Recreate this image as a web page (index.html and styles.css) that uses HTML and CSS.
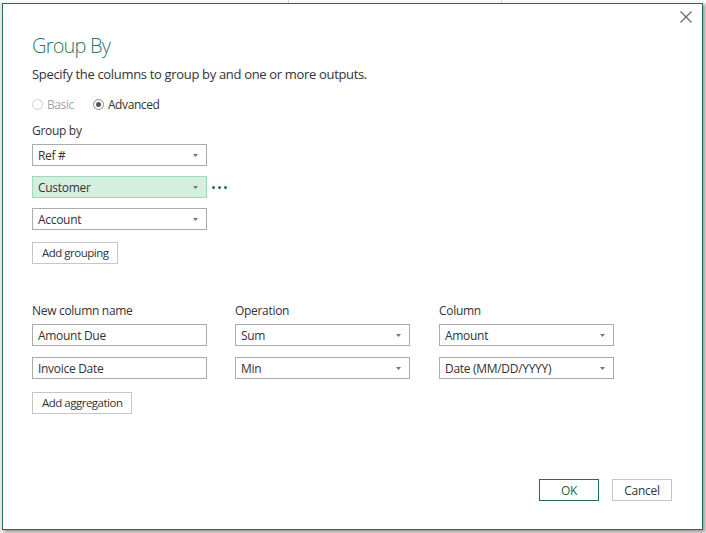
FILE: index.html
```html
<!DOCTYPE html>
<html lang="en">
<head>
<meta charset="utf-8">
<title>Group By</title>
<link rel="stylesheet" href="styles.css">
</head>
<body>
<div class="backdrop">
  <div class="dialog">
    <button class="close" aria-label="Close">
      <svg width="12" height="12" viewBox="0 0 12 12"><path d="M0.5 0.5 L11.5 11.5 M11.5 0.5 L0.5 11.5" stroke="#666" stroke-width="1.2" fill="none"/></svg>
    </button>
    <h1 class="title">Group By</h1>
    <p class="subtitle">Specify the columns to group by and one or more outputs.</p>
    <div class="mode">
      <label class="radio disabled"><span class="circle"></span>Basic</label>
      <label class="radio checked"><span class="circle"><span class="pip"></span></span>Advanced</label>
    </div>
    <div class="label group-label">Group by</div>
    <div class="group-list">
      <div class="row"><div class="select"><span>Ref #</span><svg class="caret" width="5" height="3" viewBox="0 0 5 3"><path d="M0 0 H5 L2.5 3 Z" fill="#777"/></svg></div></div>
      <div class="row"><div class="select active"><span>Customer</span><svg class="caret" width="5" height="3" viewBox="0 0 5 3"><path d="M0 0 H5 L2.5 3 Z" fill="#777"/></svg></div><span class="more"><i></i><i></i><i></i></span></div>
      <div class="row"><div class="select"><span>Account</span><svg class="caret" width="5" height="3" viewBox="0 0 5 3"><path d="M0 0 H5 L2.5 3 Z" fill="#777"/></svg></div></div>
    </div>
    <button class="btn add-grouping">Add grouping</button>

    <div class="agg">
      <div class="agg-grid agg-head">
        <div class="label">New column name</div>
        <div class="label">Operation</div>
        <div class="label">Column</div>
      </div>
      <div class="agg-rows">
        <div class="agg-grid">
          <div class="select field"><span>Amount Due</span></div>
          <div class="select"><span>Sum</span><svg class="caret" width="5" height="3" viewBox="0 0 5 3"><path d="M0 0 H5 L2.5 3 Z" fill="#777"/></svg></div>
          <div class="select"><span>Amount</span><svg class="caret" width="5" height="3" viewBox="0 0 5 3"><path d="M0 0 H5 L2.5 3 Z" fill="#777"/></svg></div>
        </div>
        <div class="agg-grid">
          <div class="select field"><span>Invoice Date</span></div>
          <div class="select"><span>Min</span><svg class="caret" width="5" height="3" viewBox="0 0 5 3"><path d="M0 0 H5 L2.5 3 Z" fill="#777"/></svg></div>
          <div class="select"><span>Date (MM/DD/YYYY)</span><svg class="caret" width="5" height="3" viewBox="0 0 5 3"><path d="M0 0 H5 L2.5 3 Z" fill="#777"/></svg></div>
        </div>
      </div>
    </div>
    <button class="btn add-aggregation">Add aggregation</button>

    <div class="footer">
      <button class="btn action ok">OK</button>
      <button class="btn action">Cancel</button>
    </div>
  </div>
</div>
</body>
</html>
```
FILE: styles.css
```css
* { box-sizing: border-box; }
html, body { margin: 0; padding: 0; }
body {
  width: 706px;
  height: 533px;
  overflow: hidden;
  background-color: #e9e9e9;
  background-image:
    linear-gradient(to right, transparent 288px, #d2d2d2 288px, #d2d2d2 289px, transparent 289px),
    linear-gradient(to right, transparent 501px, #d2d2d2 501px, #d2d2d2 502px, transparent 502px),
    linear-gradient(#fbfbfb, #fbfbfb);
  background-size: 100% 3px, 100% 3px, 100% 3px;
  background-repeat: no-repeat;
  font-family: "Segoe UI", "Open Sans", sans-serif;
  color: #333;
}
.backdrop { padding: 3px 0 0 2px; }
.dialog {
  position: relative;
  width: 701px;
  height: 527px;
  background: #fff;
  border: 1px solid #1e7145;
  box-shadow: 2px 2px 3px rgba(0, 0, 0, 0.35);
  padding: 28px 30px 28px 29px;
  display: flex;
  flex-direction: column;
  align-items: flex-start;
}
.close {
  position: absolute;
  top: 7px;
  right: 10px;
  width: 12px;
  height: 12px;
  padding: 0;
  border: 0;
  background: none;
  display: block;
}
.close svg { display: block; }
.title {
  margin: 0;
  font-size: 20px;
  font-weight: 300;
  line-height: 28px;
  letter-spacing: -0.8px;
  color: #2a7866;
}
.subtitle {
  margin: 4px 0 0;
  font-size: 13px;
  line-height: 20px;
  letter-spacing: -0.33px;
  color: #333;
}
.mode {
  margin-top: 10px;
  height: 20px;
  display: flex;
  align-items: center;
  font-size: 12px;
  letter-spacing: -0.4px;
}
.radio {
  display: flex;
  align-items: center;
  gap: 4px;
  margin-right: 19px;
  color: #333;
}
.radio.disabled { color: #a3a3a3; }
.circle {
  width: 11px;
  height: 11px;
  border-radius: 50%;
  border: 1px solid #8a8a8a;
  display: flex;
  align-items: center;
  justify-content: center;
  background: #fff;
}
.radio.disabled .circle { border-color: #cfcfcf; }
.pip {
  width: 5px;
  height: 5px;
  border-radius: 50%;
  background: #555;
}
.label {
  font-size: 12px;
  line-height: 16px;
  letter-spacing: -0.3px;
  color: #333;
}
.group-label { margin-top: 9px; }
.group-list {
  margin-top: 5px;
  display: flex;
  flex-direction: column;
  gap: 10px;
}
.row {
  display: flex;
  align-items: center;
}
.select {
  width: 175px;
  height: 22px;
  border: 1px solid #ababab;
  background: #fff;
  padding: 2px 8px 0 5px;
  display: flex;
  align-items: center;
  justify-content: space-between;
  font-size: 12px;
  line-height: 18px;
  letter-spacing: -0.3px;
  color: #333;
}
.select.active {
  background: #d4efe0;
  border-color: #a2d8ba;
}
.caret { display: block; margin-top: -2px; }
.more {
  margin-left: 5px;
  display: flex;
  gap: 3px;
}
.more i {
  width: 3px;
  height: 3px;
  border-radius: 50%;
  background: #217346;
  display: block;
}
.btn {
  height: 22px;
  padding: 0 9px;
  border: 1px solid #c6c6c6;
  background: #fff;
  font-family: inherit;
  font-size: 11.5px;
  letter-spacing: -0.5px;
  color: #333;
  line-height: 20px;
}
.add-grouping { margin-top: 12px; }
.agg { margin-top: 39px; }
.agg-grid {
  display: grid;
  grid-template-columns: 203px 204px 175px;
}
.agg-grid > * { width: 175px; }
.agg-head { margin-bottom: 5px; }
.agg-rows {
  display: flex;
  flex-direction: column;
  gap: 11px;
}
.add-aggregation { margin-top: 13px; }
.footer {
  margin-top: auto;
  align-self: flex-end;
  display: flex;
  gap: 13px;
}
.action {
  width: 60px;
  padding: 1px 0 0;
  text-align: center;
  font-size: 12px;
  letter-spacing: -0.3px;
}
.ok {
  border-color: #217346;
  color: #24634f;
}
```
